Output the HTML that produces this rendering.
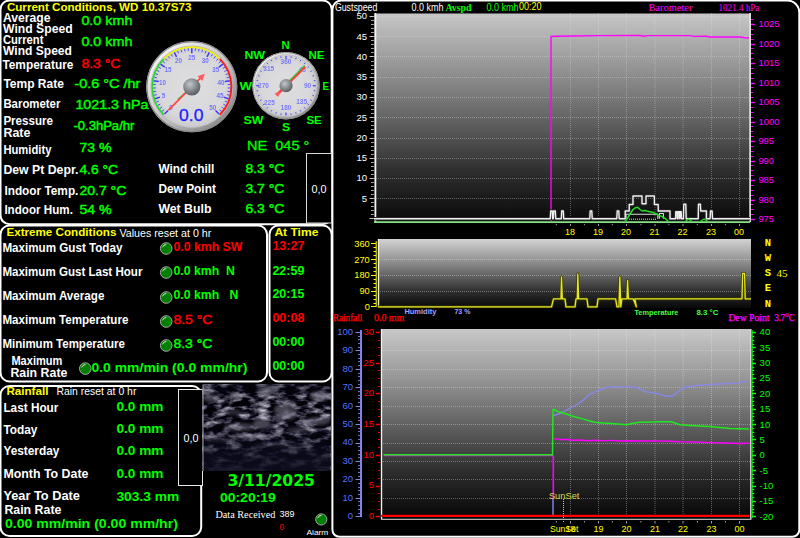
<!DOCTYPE html>
<html lang="en"><head><meta charset="utf-8"><title>Weather Display - Current Conditions</title>
<style>
html,body{margin:0;padding:0;background:#000;overflow:hidden}
svg{display:block}
text{white-space:pre}
.sb{font-family:"Liberation Sans", "DejaVu Sans", sans-serif;font-weight:bold}
.sn{font-family:"Liberation Sans", "DejaVu Sans", sans-serif;font-weight:normal}
.rb{font-family:"Liberation Serif", "DejaVu Serif", serif;font-weight:bold}
.rn{font-family:"Liberation Serif", "DejaVu Serif", serif;font-weight:normal}
.mb{font-family:"Liberation Mono", "DejaVu Sans Mono", monospace;font-weight:bold}
.mn{font-family:"Liberation Mono", "DejaVu Sans Mono", monospace;font-weight:normal}
</style></head><body>
<svg width="800" height="538" viewBox="0 0 800 538">
<defs>
<linearGradient id="g1" x1="0" y1="0" x2="0" y2="1"><stop offset="0" stop-color="#c6c6c6"/><stop offset="0.25" stop-color="#969696"/><stop offset="0.5" stop-color="#646464"/><stop offset="0.75" stop-color="#2f2f2f"/><stop offset="1" stop-color="#080808"/></linearGradient>
<linearGradient id="g2" x1="0" y1="0" x2="0" y2="1"><stop offset="0" stop-color="#d2d2d2"/><stop offset="0.25" stop-color="#a0a0a0"/><stop offset="0.5" stop-color="#6a6a6a"/><stop offset="0.75" stop-color="#303030"/><stop offset="1" stop-color="#080808"/></linearGradient>
<linearGradient id="g3" x1="0" y1="0" x2="0" y2="1"><stop offset="0" stop-color="#c8c8c8"/><stop offset="0.25" stop-color="#989898"/><stop offset="0.5" stop-color="#626262"/><stop offset="0.75" stop-color="#2d2d2d"/><stop offset="1" stop-color="#060606"/></linearGradient>
<linearGradient id="bezel" x1="0.15" y1="0.1" x2="0.85" y2="0.9"><stop offset="0" stop-color="#f4f4f4"/><stop offset="0.5" stop-color="#c8c8c8"/><stop offset="1" stop-color="#8a8a8a"/></linearGradient>
<radialGradient id="face" cx="0.5" cy="0.5" r="0.5"><stop offset="0" stop-color="#dedee0"/><stop offset="0.8" stop-color="#d8d8da"/><stop offset="1" stop-color="#cacacd"/></radialGradient>
<radialGradient id="hub" cx="0.4" cy="0.35" r="0.65"><stop offset="0" stop-color="#c4c8cc"/><stop offset="0.55" stop-color="#8a8e92"/><stop offset="1" stop-color="#5a5c60"/></radialGradient>
<clipPath id="ccl"><rect x="202.5" y="384.3" width="128.3" height="86.7"/></clipPath>
<filter id="clouds" x="0" y="0" width="1" height="1" color-interpolation-filters="sRGB">
<feTurbulence type="fractalNoise" baseFrequency="0.07 0.15" numOctaves="4" seed="11"/>
<feColorMatrix type="matrix" values="2.4 0 0 0 -1.03  2.4 0 0 0 -1.04  2.4 0 0 0 -0.98  0 0 0 0 1"/>
</filter>
<filter id="blur2" x="-0.5" y="-0.5" width="2" height="2"><feGaussianBlur stdDeviation="1.6"/></filter>
<linearGradient id="cshade" x1="0" y1="0" x2="0" y2="1"><stop offset="0" stop-color="#080818" stop-opacity="0.45"/><stop offset="0.25" stop-color="#080818" stop-opacity="0.15"/><stop offset="0.6" stop-color="#0c0c20" stop-opacity="0.35"/><stop offset="0.8" stop-color="#0c0c1e" stop-opacity="0.8"/><stop offset="1" stop-color="#0c0c1e" stop-opacity="0.92"/></linearGradient>
<radialGradient id="led" cx="0.4" cy="0.35" r="0.7"><stop offset="0" stop-color="#2a9a2a"/><stop offset="1" stop-color="#006400"/></radialGradient>
</defs>
<rect width="800" height="538" fill="#000"/>
<rect x="0.5" y="0.5" width="331.2" height="223.7" rx="9" ry="9" fill="#000" stroke="#fff" stroke-width="2"/>
<rect x="0.5" y="225.5" width="266.5" height="156.0" rx="9" ry="9" fill="#000" stroke="#fff" stroke-width="2"/>
<rect x="269.5" y="225.5" width="62.19999999999999" height="156.0" rx="9" ry="9" fill="#000" stroke="#fff" stroke-width="2"/>
<rect x="0.5" y="386.0" width="200.7" height="150" rx="9" ry="9" fill="#000" stroke="#fff" stroke-width="2"/>
<path d="M341.5 0.5H787.3A12 12 0 0 1 799.3 12.5V529.8A7 7 0 0 1 792.3 536.8H339.4A7 7 0 0 1 332.4 529.8V9.6A9.1 9.1 0 0 1 341.5 0.5Z" fill="#000" stroke="#fff" stroke-width="2"/>
<rect x="306.5" y="153.5" width="25" height="69.5" fill="#000" stroke="#d8d8d8" stroke-width="1"/>
<rect x="178.5" y="389.5" width="24" height="96" fill="#000" stroke="#e8e8e8" stroke-width="1"/>
<text class="sn" x="311.4" y="192.5" font-size="10" fill="#ffffff" textLength="15.0" lengthAdjust="spacingAndGlyphs">0,0</text>
<text class="sn" x="183.4" y="442.0" font-size="10" fill="#ffffff" textLength="15.0" lengthAdjust="spacingAndGlyphs">0,0</text>
<text class="sb" x="6.9" y="10.5" font-size="11" fill="#ffff00" textLength="184.5" lengthAdjust="spacingAndGlyphs">Current Conditions, WD 10.37S73</text>
<text class="sb" x="2.9" y="22.0" font-size="12" fill="#ffffff" textLength="47.5" lengthAdjust="spacingAndGlyphs">Average</text>
<text class="sb" x="3.1" y="33.0" font-size="12" fill="#ffffff" textLength="69.5" lengthAdjust="spacingAndGlyphs">Wind Speed</text>
<text class="sb" x="2.9" y="43.8" font-size="12" fill="#ffffff" textLength="40.5" lengthAdjust="spacingAndGlyphs">Current</text>
<text class="sb" x="3.1" y="54.8" font-size="12" fill="#ffffff" textLength="68.8" lengthAdjust="spacingAndGlyphs">Wind Speed</text>
<text class="sb" x="2.4" y="69.0" font-size="12" fill="#ffffff" textLength="71.0" lengthAdjust="spacingAndGlyphs">Temperature</text>
<text class="sb" x="3.4" y="88.0" font-size="12" fill="#ffffff" textLength="60.5" lengthAdjust="spacingAndGlyphs">Temp Rate</text>
<text class="sb" x="3.4" y="108.0" font-size="12" fill="#ffffff" textLength="57.0" lengthAdjust="spacingAndGlyphs">Barometer</text>
<text class="sb" x="3.4" y="124.9" font-size="12" fill="#ffffff" textLength="49.5" lengthAdjust="spacingAndGlyphs">Pressure</text>
<text class="sb" x="3.4" y="136.6" font-size="12" fill="#ffffff" textLength="27.0" lengthAdjust="spacingAndGlyphs">Rate</text>
<text class="sb" x="3.4" y="153.5" font-size="12" fill="#ffffff" textLength="48.0" lengthAdjust="spacingAndGlyphs">Humidity</text>
<text class="sb" x="3.4" y="173.7" font-size="12" fill="#ffffff" textLength="75.0" lengthAdjust="spacingAndGlyphs">Dew Pt Depr.</text>
<text class="sb" x="4.4" y="194.8" font-size="12" fill="#ffffff" textLength="74.0" lengthAdjust="spacingAndGlyphs">Indoor Temp.</text>
<text class="sb" x="4.4" y="214.0" font-size="12" fill="#ffffff" textLength="68.5" lengthAdjust="spacingAndGlyphs">Indoor Hum.</text>
<text class="sb" x="158.4" y="172.5" font-size="12" fill="#ffffff" textLength="56.0" lengthAdjust="spacingAndGlyphs">Wind chill</text>
<text class="sb" x="158.4" y="192.5" font-size="12" fill="#ffffff" textLength="57.5" lengthAdjust="spacingAndGlyphs">Dew Point</text>
<text class="sb" x="158.4" y="212.5" font-size="12" fill="#ffffff" textLength="53.0" lengthAdjust="spacingAndGlyphs">Wet Bulb</text>
<text class="sn" x="81.4" y="25.4" font-size="13.5" fill="#00ff00" textLength="51.0" lengthAdjust="spacingAndGlyphs" stroke="#00ff00" stroke-width="0.45">0.0 kmh</text>
<text class="sn" x="81.4" y="46.2" font-size="13.5" fill="#00ff00" textLength="51.0" lengthAdjust="spacingAndGlyphs" stroke="#00ff00" stroke-width="0.45">0.0 kmh</text>
<text class="sn" x="81.4" y="68.2" font-size="13.5" fill="#ff0000" textLength="39.0" lengthAdjust="spacingAndGlyphs" stroke="#ff0000" stroke-width="0.45">8.3 °C</text>
<text class="sn" x="74.4" y="88.4" font-size="13.5" fill="#00ff00" textLength="66.0" lengthAdjust="spacingAndGlyphs" stroke="#00ff00" stroke-width="0.45">-0.6 °C /hr</text>
<text class="sn" x="75.4" y="109.2" font-size="13.5" fill="#00ff00" textLength="73.0" lengthAdjust="spacingAndGlyphs" stroke="#00ff00" stroke-width="0.45">1021.3 hPa</text>
<text class="sn" x="73.4" y="129.5" font-size="12" fill="#00ff00" textLength="61.0" lengthAdjust="spacingAndGlyphs" stroke="#00ff00" stroke-width="0.45">-0.3hPa/hr</text>
<text class="sn" x="79.4" y="152.3" font-size="13.5" fill="#00ff00" textLength="32.0" lengthAdjust="spacingAndGlyphs" stroke="#00ff00" stroke-width="0.45">73 %</text>
<text class="sn" x="79.4" y="173.8" font-size="13.5" fill="#00ff00" textLength="38.5" lengthAdjust="spacingAndGlyphs" stroke="#00ff00" stroke-width="0.45">4.6 °C</text>
<text class="sn" x="79.4" y="194.8" font-size="13.5" fill="#00ff00" textLength="47.0" lengthAdjust="spacingAndGlyphs" stroke="#00ff00" stroke-width="0.45">20.7 °C</text>
<text class="sn" x="79.4" y="214.3" font-size="13.5" fill="#00ff00" textLength="32.0" lengthAdjust="spacingAndGlyphs" stroke="#00ff00" stroke-width="0.45">54 %</text>
<text class="sn" x="245.4" y="172.8" font-size="13.5" fill="#00ff00" textLength="39.0" lengthAdjust="spacingAndGlyphs" stroke="#00ff00" stroke-width="0.45">8.3 °C</text>
<text class="sn" x="245.4" y="192.8" font-size="13.5" fill="#00ff00" textLength="39.0" lengthAdjust="spacingAndGlyphs" stroke="#00ff00" stroke-width="0.45">3.7 °C</text>
<text class="sn" x="245.4" y="213.3" font-size="13.5" fill="#00ff00" textLength="39.0" lengthAdjust="spacingAndGlyphs" stroke="#00ff00" stroke-width="0.45">6.3 °C</text>
<text class="sn" x="246.9" y="149.5" font-size="13.5" fill="#00ff00" textLength="62.5" lengthAdjust="spacingAndGlyphs" stroke="#00ff00" stroke-width="0.3">NE  045 °</text>
<text class="sb" x="6.4" y="236.0" font-size="11" fill="#ffff00" textLength="110.0" lengthAdjust="spacingAndGlyphs">Extreme Conditions</text>
<text class="sn" x="119.4" y="236.8" font-size="10.5" fill="#ffffff" textLength="92.0" lengthAdjust="spacingAndGlyphs">Values reset at 0 hr</text>
<text class="sb" x="274.4" y="236.0" font-size="11" fill="#ffff00" textLength="44.0" lengthAdjust="spacingAndGlyphs">At Time</text>
<text class="sb" x="2.4" y="251.7" font-size="12" fill="#ffffff" textLength="120.0" lengthAdjust="spacingAndGlyphs">Maximum Gust Today</text>
<text class="sb" x="2.4" y="276.0" font-size="12" fill="#ffffff" textLength="140.0" lengthAdjust="spacingAndGlyphs">Maximum Gust Last Hour</text>
<text class="sb" x="2.4" y="300.0" font-size="12" fill="#ffffff" textLength="102.0" lengthAdjust="spacingAndGlyphs">Maximum Average</text>
<text class="sb" x="2.4" y="324.0" font-size="12" fill="#ffffff" textLength="126.0" lengthAdjust="spacingAndGlyphs">Maximum Temperature</text>
<text class="sb" x="2.4" y="348.0" font-size="12" fill="#ffffff" textLength="122.5" lengthAdjust="spacingAndGlyphs">Minimum Temperature</text>
<text class="sb" x="11.4" y="364.7" font-size="12" fill="#ffffff" textLength="51.0" lengthAdjust="spacingAndGlyphs">Maximum</text>
<text class="sb" x="10.4" y="376.5" font-size="12" fill="#ffffff" textLength="57.0" lengthAdjust="spacingAndGlyphs">Rain Rate</text>
<circle cx="166.2" cy="248.5" r="5.8" fill="#008000" stroke="#a8a8a8" stroke-width="1"/>
<path d="M162.6 247.3A4 4 0 0 1 166.4 244.5" fill="none" stroke="#e8f4e8" stroke-width="0.9"/>
<circle cx="166.2" cy="272.5" r="5.8" fill="#008000" stroke="#a8a8a8" stroke-width="1"/>
<path d="M162.6 271.3A4 4 0 0 1 166.4 268.5" fill="none" stroke="#e8f4e8" stroke-width="0.9"/>
<circle cx="166.2" cy="297.5" r="5.8" fill="#008000" stroke="#a8a8a8" stroke-width="1"/>
<path d="M162.6 296.3A4 4 0 0 1 166.4 293.5" fill="none" stroke="#e8f4e8" stroke-width="0.9"/>
<circle cx="166.2" cy="321.5" r="5.8" fill="#008000" stroke="#a8a8a8" stroke-width="1"/>
<path d="M162.6 320.3A4 4 0 0 1 166.4 317.5" fill="none" stroke="#e8f4e8" stroke-width="0.9"/>
<circle cx="166.2" cy="345.5" r="5.8" fill="#008000" stroke="#a8a8a8" stroke-width="1"/>
<path d="M162.6 344.3A4 4 0 0 1 166.4 341.5" fill="none" stroke="#e8f4e8" stroke-width="0.9"/>
<circle cx="85.3" cy="368.6" r="5.8" fill="#008000" stroke="#a8a8a8" stroke-width="1"/>
<path d="M81.7 367.4A4 4 0 0 1 85.5 364.6" fill="none" stroke="#e8f4e8" stroke-width="0.9"/>
<text class="sb" x="173.4" y="250.6" font-size="12" fill="#ff0000" textLength="69.0" lengthAdjust="spacingAndGlyphs">0.0 kmh SW</text>
<text class="sb" x="173.4" y="275.0" font-size="12" fill="#00ff00" textLength="61.5" lengthAdjust="spacingAndGlyphs">0.0 kmh  N</text>
<text class="sb" x="173.4" y="298.6" font-size="12" fill="#00ff00" textLength="65.0" lengthAdjust="spacingAndGlyphs">0.0 kmh   N</text>
<text class="sn" x="173.4" y="324.0" font-size="13" fill="#ff0000" textLength="39.0" lengthAdjust="spacingAndGlyphs" stroke="#ff0000" stroke-width="0.45">8.5 °C</text>
<text class="sn" x="173.4" y="348.0" font-size="13" fill="#00ff00" textLength="39.0" lengthAdjust="spacingAndGlyphs" stroke="#00ff00" stroke-width="0.45">8.3 °C</text>
<text class="sb" x="91.4" y="372.0" font-size="13" fill="#00ff00" textLength="156.0" lengthAdjust="spacingAndGlyphs">0.0 mm/min (0.0 mm/hr)</text>
<text class="sb" x="272.4" y="250.0" font-size="12" fill="#ff0000" textLength="32.0" lengthAdjust="spacingAndGlyphs">13:27</text>
<text class="sb" x="272.4" y="274.5" font-size="12" fill="#00ff00" textLength="32.0" lengthAdjust="spacingAndGlyphs">22:59</text>
<text class="sb" x="272.4" y="298.0" font-size="12" fill="#00ff00" textLength="32.0" lengthAdjust="spacingAndGlyphs">20:15</text>
<text class="sb" x="272.4" y="322.0" font-size="12" fill="#ff0000" textLength="32.0" lengthAdjust="spacingAndGlyphs">00:08</text>
<text class="sb" x="272.4" y="346.0" font-size="12" fill="#00ff00" textLength="32.0" lengthAdjust="spacingAndGlyphs">00:00</text>
<text class="sb" x="272.4" y="370.0" font-size="12" fill="#00ff00" textLength="32.0" lengthAdjust="spacingAndGlyphs">00:00</text>
<text class="sb" x="6.4" y="394.5" font-size="11" fill="#ffff00" textLength="42.0" lengthAdjust="spacingAndGlyphs">Rainfall</text>
<text class="sn" x="56.4" y="395.4" font-size="10.5" fill="#ffffff" textLength="80.0" lengthAdjust="spacingAndGlyphs">Rain reset at 0 hr</text>
<text class="sb" x="3.4" y="411.8" font-size="12" fill="#ffffff" textLength="55.0" lengthAdjust="spacingAndGlyphs">Last Hour</text>
<text class="sb" x="3.4" y="433.6" font-size="12" fill="#ffffff" textLength="34.0" lengthAdjust="spacingAndGlyphs">Today</text>
<text class="sb" x="3.4" y="455.2" font-size="12" fill="#ffffff" textLength="56.0" lengthAdjust="spacingAndGlyphs">Yesterday</text>
<text class="sb" x="3.4" y="477.9" font-size="12" fill="#ffffff" textLength="85.0" lengthAdjust="spacingAndGlyphs">Month To Date</text>
<text class="sb" x="3.4" y="499.9" font-size="12" fill="#ffffff" textLength="76.5" lengthAdjust="spacingAndGlyphs">Year To Date</text>
<text class="sb" x="4.4" y="513.5" font-size="12" fill="#ffffff" textLength="57.0" lengthAdjust="spacingAndGlyphs">Rain Rate</text>
<text class="sb" x="116.4" y="411.4" font-size="13" fill="#00ff00" textLength="47.0" lengthAdjust="spacingAndGlyphs">0.0 mm</text>
<text class="sb" x="116.4" y="433.4" font-size="13" fill="#00ff00" textLength="47.0" lengthAdjust="spacingAndGlyphs">0.0 mm</text>
<text class="sb" x="116.4" y="455.4" font-size="13" fill="#00ff00" textLength="47.0" lengthAdjust="spacingAndGlyphs">0.0 mm</text>
<text class="sb" x="116.4" y="477.9" font-size="13" fill="#00ff00" textLength="47.0" lengthAdjust="spacingAndGlyphs">0.0 mm</text>
<text class="sb" x="116.4" y="501.4" font-size="13" fill="#00ff00" textLength="63.0" lengthAdjust="spacingAndGlyphs">303.3 mm</text>
<text class="sb" x="4.9" y="527.5" font-size="13" fill="#00ff00" textLength="173.0" lengthAdjust="spacingAndGlyphs">0.00 mm/min (0.00 mm/hr)</text>
<text class="sb" x="227.4" y="486.3" font-size="15.3" fill="#00ff00" textLength="87.5" lengthAdjust="spacingAndGlyphs" style="font-family:'DejaVu Sans','Liberation Sans',sans-serif">3/11/2025</text>
<text class="sb" x="219.9" y="502.0" font-size="12.5" fill="#00ff00" textLength="56.0" lengthAdjust="spacingAndGlyphs">00:20:19</text>
<text class="rn" x="215.4" y="518.0" font-size="10" fill="#ffffff" textLength="60.0" lengthAdjust="spacingAndGlyphs">Data Received</text>
<text class="sn" x="279.4" y="516.6" font-size="8.5" fill="#ffffff" textLength="15.0" lengthAdjust="spacingAndGlyphs">389</text>
<text class="sn" x="279.6" y="530.3" font-size="8.5" fill="#ff0000">0</text>
<circle cx="321.3" cy="519.4" r="5.6" fill="#008000" stroke="#a8a8a8" stroke-width="1"/>
<path d="M317.7 518.2A4 4 0 0 1 321.5 515.4" fill="none" stroke="#e8f4e8" stroke-width="0.9"/>
<text class="sn" x="306.4" y="534.5" font-size="8" fill="#ffffff" textLength="22.0" lengthAdjust="spacingAndGlyphs">Alarm</text>
<rect x="374.5" y="13.5" width="376" height="210" fill="url(#g1)"/>
<line x1="374" y1="198.5" x2="750" y2="198.5" stroke="#e8e8e8" stroke-width="1" stroke-dasharray="1 1" opacity="0.34"/>
<line x1="374" y1="178.5" x2="750" y2="178.5" stroke="#e8e8e8" stroke-width="1" stroke-dasharray="1 1" opacity="0.34"/>
<line x1="374" y1="158.5" x2="750" y2="158.5" stroke="#e8e8e8" stroke-width="1" stroke-dasharray="1 1" opacity="0.34"/>
<line x1="374" y1="138.5" x2="750" y2="138.5" stroke="#e8e8e8" stroke-width="1" stroke-dasharray="1 1" opacity="0.34"/>
<line x1="374" y1="117.5" x2="750" y2="117.5" stroke="#e8e8e8" stroke-width="1" stroke-dasharray="1 1" opacity="0.34"/>
<line x1="374" y1="97.5" x2="750" y2="97.5" stroke="#e8e8e8" stroke-width="1" stroke-dasharray="1 1" opacity="0.34"/>
<line x1="374" y1="77.5" x2="750" y2="77.5" stroke="#e8e8e8" stroke-width="1" stroke-dasharray="1 1" opacity="0.34"/>
<line x1="374" y1="56.5" x2="750" y2="56.5" stroke="#e8e8e8" stroke-width="1" stroke-dasharray="1 1" opacity="0.34"/>
<line x1="374" y1="36.5" x2="750" y2="36.5" stroke="#e8e8e8" stroke-width="1" stroke-dasharray="1 1" opacity="0.34"/>
<line x1="374" y1="16.5" x2="750" y2="16.5" stroke="#e8e8e8" stroke-width="1" stroke-dasharray="1 1" opacity="0.34"/>
<line x1="570.5" y1="13" x2="570.5" y2="220" stroke="#e8e8e8" stroke-width="1" stroke-dasharray="1 1" opacity="0.32"/>
<line x1="598.5" y1="13" x2="598.5" y2="220" stroke="#e8e8e8" stroke-width="1" stroke-dasharray="1 1" opacity="0.32"/>
<line x1="626.5" y1="13" x2="626.5" y2="220" stroke="#e8e8e8" stroke-width="1" stroke-dasharray="1 1" opacity="0.32"/>
<line x1="655.0" y1="13" x2="655.0" y2="220" stroke="#e8e8e8" stroke-width="1" stroke-dasharray="1 1" opacity="0.32"/>
<line x1="683.0" y1="13" x2="683.0" y2="220" stroke="#e8e8e8" stroke-width="1" stroke-dasharray="1 1" opacity="0.32"/>
<line x1="711.5" y1="13" x2="711.5" y2="220" stroke="#e8e8e8" stroke-width="1" stroke-dasharray="1 1" opacity="0.32"/>
<line x1="739.5" y1="13" x2="739.5" y2="220" stroke="#e8e8e8" stroke-width="1" stroke-dasharray="1 1" opacity="0.32"/>
<line x1="375.4" y1="13" x2="375.4" y2="222" stroke="#f4f4f4" stroke-width="1.8" opacity="1"/>
<path d="M369.5 218.5H373.8 M369.5 198.5H373.8 M369.5 178.5H373.8 M369.5 158.5H373.8 M369.5 138.5H373.8 M369.5 117.5H373.8 M369.5 97.5H373.8 M369.5 77.5H373.8 M369.5 56.5H373.8 M369.5 36.5H373.8 M369.5 16.5H373.8" stroke="#c4c4c4" stroke-width="1.2" fill="none"/>
<path d="M371 214.5H373.8 M371 210.5H373.8 M371 206.5H373.8 M371 202.5H373.8 M371 194.5H373.8 M371 190.5H373.8 M371 186.5H373.8 M371 182.5H373.8 M371 174.5H373.8 M371 170.5H373.8 M371 166.5H373.8 M371 162.5H373.8 M371 154.5H373.8 M371 150.5H373.8 M371 146.5H373.8 M371 142.5H373.8 M371 133.5H373.8 M371 129.5H373.8 M371 125.5H373.8 M371 121.5H373.8 M371 113.5H373.8 M371 109.5H373.8 M371 105.5H373.8 M371 101.5H373.8 M371 93.5H373.8 M371 89.5H373.8 M371 85.5H373.8 M371 81.5H373.8 M371 73.5H373.8 M371 69.5H373.8 M371 65.5H373.8 M371 61.5H373.8 M371 52.5H373.8 M371 48.5H373.8 M371 44.5H373.8 M371 40.5H373.8 M371 32.5H373.8 M371 28.5H373.8 M371 24.5H373.8 M371 20.5H373.8" stroke="#a8a8a8" stroke-width="1" fill="none"/>
<text class="sn" x="367.0" y="201.6" font-size="9.5" fill="#ffffff" text-anchor="end">5</text>
<text class="sn" x="367.0" y="181.3" font-size="9.5" fill="#ffffff" text-anchor="end">10</text>
<text class="sn" x="367.0" y="161.1" font-size="9.5" fill="#ffffff" text-anchor="end">15</text>
<text class="sn" x="367.0" y="140.8" font-size="9.5" fill="#ffffff" text-anchor="end">20</text>
<text class="sn" x="367.0" y="120.5" font-size="9.5" fill="#ffffff" text-anchor="end">25</text>
<text class="sn" x="367.0" y="100.3" font-size="9.5" fill="#ffffff" text-anchor="end">30</text>
<text class="sn" x="367.0" y="80.0" font-size="9.5" fill="#ffffff" text-anchor="end">35</text>
<text class="sn" x="367.0" y="59.8" font-size="9.5" fill="#ffffff" text-anchor="end">40</text>
<text class="sn" x="367.0" y="39.5" font-size="9.5" fill="#ffffff" text-anchor="end">45</text>
<text class="sn" x="367.0" y="19.3" font-size="9.5" fill="#ffffff" text-anchor="end">50</text>
<line x1="750.1" y1="13" x2="750.1" y2="222" stroke="#ececec" stroke-width="1.6" opacity="1"/>
<path d="M751 219.5H754.8 M751 200.5H754.8 M751 180.5H754.8 M751 161.5H754.8 M751 141.5H754.8 M751 122.5H754.8 M751 102.5H754.8 M751 83.5H754.8 M751 63.5H754.8 M751 44.5H754.8 M751 24.5H754.8" stroke="#ff00ff" stroke-width="1.3" fill="none"/>
<path d="M751 214.5H753.2 M751 209.5H753.2 M751 204.5H753.2 M751 195.5H753.2 M751 190.5H753.2 M751 185.5H753.2 M751 175.5H753.2 M751 170.5H753.2 M751 165.5H753.2 M751 156.5H753.2 M751 151.5H753.2 M751 146.5H753.2 M751 136.5H753.2 M751 131.5H753.2 M751 126.5H753.2 M751 117.5H753.2 M751 112.5H753.2 M751 107.5H753.2 M751 97.5H753.2 M751 92.5H753.2 M751 87.5H753.2 M751 78.5H753.2 M751 73.5H753.2 M751 68.5H753.2 M751 58.5H753.2 M751 53.5H753.2 M751 48.5H753.2 M751 39.5H753.2 M751 34.5H753.2 M751 29.5H753.2 M751 19.5H753.2" stroke="#ff00ff" stroke-width="1" fill="none"/>
<text class="sn" x="758.4" y="222.1" font-size="9.5" fill="#ff00ff" textLength="15.6" lengthAdjust="spacingAndGlyphs">975</text>
<text class="sn" x="758.4" y="202.6" font-size="9.5" fill="#ff00ff" textLength="15.6" lengthAdjust="spacingAndGlyphs">980</text>
<text class="sn" x="758.4" y="183.1" font-size="9.5" fill="#ff00ff" textLength="15.6" lengthAdjust="spacingAndGlyphs">985</text>
<text class="sn" x="758.4" y="163.6" font-size="9.5" fill="#ff00ff" textLength="15.6" lengthAdjust="spacingAndGlyphs">990</text>
<text class="sn" x="758.4" y="144.1" font-size="9.5" fill="#ff00ff" textLength="15.6" lengthAdjust="spacingAndGlyphs">995</text>
<text class="sn" x="758.4" y="124.6" font-size="9.5" fill="#ff00ff" textLength="21.3" lengthAdjust="spacingAndGlyphs">1000</text>
<text class="sn" x="758.4" y="105.1" font-size="9.5" fill="#ff00ff" textLength="21.3" lengthAdjust="spacingAndGlyphs">1005</text>
<text class="sn" x="758.4" y="85.6" font-size="9.5" fill="#ff00ff" textLength="21.3" lengthAdjust="spacingAndGlyphs">1010</text>
<text class="sn" x="758.4" y="66.1" font-size="9.5" fill="#ff00ff" textLength="21.3" lengthAdjust="spacingAndGlyphs">1015</text>
<text class="sn" x="758.4" y="46.6" font-size="9.5" fill="#ff00ff" textLength="21.3" lengthAdjust="spacingAndGlyphs">1020</text>
<text class="sn" x="758.4" y="27.1" font-size="9.5" fill="#ff00ff" textLength="21.3" lengthAdjust="spacingAndGlyphs">1025</text>
<text class="sn" x="334.9" y="10.8" font-size="10" fill="#ffffff" textLength="42.5" lengthAdjust="spacingAndGlyphs">Gustspeed</text>
<text class="sn" x="411.4" y="10.8" font-size="10" fill="#ffffff" textLength="32.0" lengthAdjust="spacingAndGlyphs">0.0 kmh</text>
<text class="rb" x="445.4" y="10.5" font-size="9.5" fill="#00ff00" textLength="26.0" lengthAdjust="spacingAndGlyphs">Avspd</text>
<text class="sn" x="486.4" y="10.8" font-size="10" fill="#00ff00" textLength="32.0" lengthAdjust="spacingAndGlyphs">0.0 kmh</text>
<text class="sn" x="518.9" y="10.3" font-size="10" fill="#ffff00" textLength="22.5" lengthAdjust="spacingAndGlyphs">00:20</text>
<text class="rn" x="648.4" y="10.5" font-size="9.5" fill="#ff00ff" textLength="44.0" lengthAdjust="spacingAndGlyphs">Barometer</text>
<text class="rn" x="718.4" y="10.5" font-size="9.5" fill="#ff00ff" textLength="41.0" lengthAdjust="spacingAndGlyphs">1021.4 hPa</text>
<line x1="551" y1="36" x2="551" y2="221" stroke="#ff00ff" stroke-width="1.4" opacity="1"/>
<polyline points="551.0,36.5 556.0,36.2 575.0,36.0 600.0,35.6 640.0,35.5 644.0,36.3 648.0,35.6 690.0,35.6 694.0,36.4 706.0,36.2 710.0,37.0 740.0,37.0 745.0,37.8 749.0,38.0" fill="none" stroke="#ff00ff" stroke-width="1.4" stroke-linejoin="round"/>
<polyline points="374.0,218.7 550.3,218.7 550.7,211.0 552.3,211.0 552.7,218.7 553.3,218.7 553.7,211.0 555.3,211.0 555.7,218.7 561.3,218.7 561.7,211.0 563.3,211.0 563.7,218.7 589.8,218.7 590.2,211.0 591.8,211.0 592.2,218.7 616.8,218.7 617.2,211.0 618.8,211.0 619.2,218.7 625.2,218.7 625.2,211.0 629.2,211.0 629.2,204.5 633.0,204.5 633.0,196.0 642.0,196.0 642.0,203.8 646.0,203.8 646.0,196.0 654.4,196.0 654.4,204.5 658.2,204.5 658.2,211.0 670.0,211.0 670.0,218.7 675.6,218.7 675.8,211.8 677.3,211.8 677.5,218.7 678.0,218.7 678.2,211.8 679.6,211.8 679.8,218.7 680.2,211.8 681.2,211.8 681.4,218.7 683.4,218.7 683.8,204.2 685.8,204.2 686.2,218.7 698.2,218.7 698.5,204.2 700.4,204.2 700.7,211.0 706.4,211.0 706.4,218.7 710.1,218.7 710.5,211.0 712.1,211.0 712.5,218.7 750.0,218.7" fill="none" stroke="#282828" stroke-width="3.4" stroke-linejoin="round"/>
<rect x="675.6" y="212" width="5.8" height="6.5" fill="#8a8a8a"/>
<polyline points="374.0,218.7 550.3,218.7 550.7,211.0 552.3,211.0 552.7,218.7 553.3,218.7 553.7,211.0 555.3,211.0 555.7,218.7 561.3,218.7 561.7,211.0 563.3,211.0 563.7,218.7 589.8,218.7 590.2,211.0 591.8,211.0 592.2,218.7 616.8,218.7 617.2,211.0 618.8,211.0 619.2,218.7 625.2,218.7 625.2,211.0 629.2,211.0 629.2,204.5 633.0,204.5 633.0,196.0 642.0,196.0 642.0,203.8 646.0,203.8 646.0,196.0 654.4,196.0 654.4,204.5 658.2,204.5 658.2,211.0 670.0,211.0 670.0,218.7 675.6,218.7 675.8,211.8 677.3,211.8 677.5,218.7 678.0,218.7 678.2,211.8 679.6,211.8 679.8,218.7 680.2,211.8 681.2,211.8 681.4,218.7 683.4,218.7 683.8,204.2 685.8,204.2 686.2,218.7 698.2,218.7 698.5,204.2 700.4,204.2 700.7,211.0 706.4,211.0 706.4,218.7 710.1,218.7 710.5,211.0 712.1,211.0 712.5,218.7 750.0,218.7" fill="none" stroke="#f0f0f0" stroke-width="1.4" stroke-linejoin="round"/>
<polyline points="626.0,218.7 626.0,214.3 657.8,214.3 657.8,218.7" fill="none" stroke="#dcdcdc" stroke-width="1.1" stroke-linejoin="round"/>
<polyline points="659.4,218.7 659.4,213.5 663.4,213.5 663.4,218.7" fill="none" stroke="#dcdcdc" stroke-width="1.1" stroke-linejoin="round"/>
<line x1="629" y1="219.2" x2="657" y2="219.2" stroke="#e8e8e8" stroke-width="1" stroke-dasharray="1 1" opacity="1"/>
<line x1="374" y1="222.2" x2="750" y2="222.2" stroke="#86e286" stroke-width="1.7" opacity="1"/>
<polyline points="625.0,221.5 627.0,219.0 630.0,214.0 633.0,209.5 635.5,207.7 637.5,207.3 640.0,209.5 642.2,211.0 645.0,210.6 648.7,211.5 653.6,212.6 658.5,215.0 662.0,216.6 665.0,218.3 668.2,221.3" fill="none" stroke="#20e020" stroke-width="1.5" stroke-linejoin="round"/>
<polyline points="685.0,221.5 688.5,219.0 692.0,221.5" fill="none" stroke="#20e020" stroke-width="1.3" stroke-linejoin="round"/>
<polyline points="700.0,221.5 704.0,219.0 708.0,221.5" fill="none" stroke="#20e020" stroke-width="1.3" stroke-linejoin="round"/>
<path d="M570.5 224v2M556.4 224v1.2 M598.5 224v2M584.4 224v1.2 M626.5 224v2M612.4 224v1.2 M655.0 224v2M640.9 224v1.2 M683.0 224v2M668.9 224v1.2 M711.5 224v2M697.4 224v1.2 M739.5 224v2M725.4 224v1.2" stroke="#9a9a9a" stroke-width="1" fill="none"/>
<text class="sn" x="570.0" y="235.4" font-size="9" fill="#ffff00" text-anchor="middle">18</text>
<text class="sn" x="598.0" y="235.4" font-size="9" fill="#ffff00" text-anchor="middle">19</text>
<text class="sn" x="626.0" y="235.4" font-size="9" fill="#ffff00" text-anchor="middle">20</text>
<text class="sn" x="654.5" y="235.4" font-size="9" fill="#ffff00" text-anchor="middle">21</text>
<text class="sn" x="682.5" y="235.4" font-size="9" fill="#ffff00" text-anchor="middle">22</text>
<text class="sn" x="711.0" y="235.4" font-size="9" fill="#ffff00" text-anchor="middle">23</text>
<text class="sn" x="739.0" y="235.4" font-size="9" fill="#ffff00" text-anchor="middle">00</text>
<rect x="378" y="239" width="373" height="69" fill="url(#g2)"/>
<line x1="378" y1="291.5" x2="751" y2="291.5" stroke="#f0f0f0" stroke-width="1" stroke-dasharray="1 1" opacity="0.35"/>
<line x1="378" y1="275.5" x2="751" y2="275.5" stroke="#f0f0f0" stroke-width="1" stroke-dasharray="1 1" opacity="0.35"/>
<line x1="378" y1="259.5" x2="751" y2="259.5" stroke="#f0f0f0" stroke-width="1" stroke-dasharray="1 1" opacity="0.35"/>
<line x1="378.5" y1="239" x2="378.5" y2="308" stroke="#f0f0f0" stroke-width="1.4" opacity="1"/>
<line x1="376.2" y1="241" x2="376.2" y2="307" stroke="#ffff00" stroke-width="1" opacity="1"/>
<path d="M371 306.5H376 M371 291.5H376 M371 275.5H376 M371 259.5H376 M371 243.5H376" stroke="#ffff00" stroke-width="1.2" fill="none"/>
<path d="M373.5 303.5H376 M373.5 299.5H376 M373.5 295.5H376 M373.5 287.5H376 M373.5 283.5H376 M373.5 279.5H376 M373.5 271.5H376 M373.5 267.5H376 M373.5 263.5H376 M373.5 255.5H376 M373.5 251.5H376 M373.5 247.5H376" stroke="#ffff00" stroke-width="1" fill="none"/>
<text class="sn" x="369.8" y="309.8" font-size="9.3" fill="#ffff00" text-anchor="end">0</text>
<text class="sn" x="369.8" y="294.0" font-size="9.3" fill="#ffff00" text-anchor="end">90</text>
<text class="sn" x="369.8" y="278.2" font-size="9.3" fill="#ffff00" text-anchor="end">180</text>
<text class="sn" x="369.8" y="262.5" font-size="9.3" fill="#ffff00" text-anchor="end">270</text>
<text class="sn" x="369.8" y="246.7" font-size="9.3" fill="#ffff00" text-anchor="end">360</text>
<text class="mb" x="768.0" y="246.0" font-size="10.5" fill="#ffff00" text-anchor="middle">N</text>
<text class="mb" x="768.0" y="261.4" font-size="10.5" fill="#ffff00" text-anchor="middle">W</text>
<text class="mb" x="768.0" y="276.2" font-size="10.5" fill="#ffff00" text-anchor="middle">S</text>
<text class="mb" x="768.0" y="291.2" font-size="10.5" fill="#ffff00" text-anchor="middle">E</text>
<text class="mb" x="768.0" y="306.8" font-size="10.5" fill="#ffff00" text-anchor="middle">N</text>
<text class="rn" x="776.4" y="276.5" font-size="10.5" fill="#ffff00" textLength="11.0" lengthAdjust="spacingAndGlyphs">45</text>
<polyline points="378.0,306.8 551.5,306.8 553.5,298.8 561.0,298.8 561.5,276.8 562.3,298.8 565.0,298.8 566.0,306.8 575.0,306.8 576.0,298.8 577.3,298.8 577.8,274.0 578.6,298.8 587.0,298.8 588.0,306.8 597.0,306.8 598.0,298.8 615.6,298.8 617.0,306.8 619.0,306.8 619.8,276.8 620.8,306.8 621.8,298.8 627.0,298.8 627.6,280.4 628.4,298.8 633.0,298.8 635.0,303.0 636.3,306.8 634.8,298.8 742.0,298.8 742.6,273.5 744.6,273.5 745.2,298.8 751.0,298.8" fill="none" stroke="#3a3a00" stroke-width="2.8" stroke-linejoin="round"/>
<polyline points="378.0,306.8 551.5,306.8 553.5,298.8 561.0,298.8 561.5,276.8 562.3,298.8 565.0,298.8 566.0,306.8 575.0,306.8 576.0,298.8 577.3,298.8 577.8,274.0 578.6,298.8 587.0,298.8 588.0,306.8 597.0,306.8 598.0,298.8 615.6,298.8 617.0,306.8 619.0,306.8 619.8,276.8 620.8,306.8 621.8,298.8 627.0,298.8 627.6,280.4 628.4,298.8 633.0,298.8 635.0,303.0 636.3,306.8 634.8,298.8 742.0,298.8 742.6,273.5 744.6,273.5 745.2,298.8 751.0,298.8" fill="none" stroke="#e6e628" stroke-width="1.3" stroke-linejoin="round"/>
<text class="rn" x="332.9" y="320.5" font-size="10" fill="#ff0000" textLength="29.5" lengthAdjust="spacingAndGlyphs" stroke="#ff0000" stroke-width="0.25">Rainfall</text>
<text class="rn" x="373.9" y="320.5" font-size="10" fill="#ff0000" textLength="30.5" lengthAdjust="spacingAndGlyphs" stroke="#ff0000" stroke-width="0.25">0.0 mm</text>
<text class="sb" x="404.4" y="314.0" font-size="7" fill="#a0a0ff" textLength="32.0" lengthAdjust="spacingAndGlyphs">Humidity</text>
<text class="sb" x="454.4" y="314.0" font-size="7" fill="#a0a0ff" textLength="16.0" lengthAdjust="spacingAndGlyphs">73 %</text>
<text class="sb" x="634.4" y="315.0" font-size="7" fill="#40ff40" textLength="44.0" lengthAdjust="spacingAndGlyphs">Temperature</text>
<text class="sb" x="696.4" y="315.0" font-size="7" fill="#40ff40" textLength="22.0" lengthAdjust="spacingAndGlyphs">8.3 °C</text>
<text class="rn" x="728.4" y="320.5" font-size="10" fill="#ff00ff" textLength="41.0" lengthAdjust="spacingAndGlyphs" stroke="#ff00ff" stroke-width="0.25">Dew Point</text>
<text class="rn" x="774.4" y="320.5" font-size="10" fill="#ff00ff" textLength="20.0" lengthAdjust="spacingAndGlyphs" stroke="#ff00ff" stroke-width="0.25">3.7°C</text>
<rect x="381" y="329" width="370" height="190" fill="url(#g3)"/>
<line x1="381" y1="498.5" x2="751" y2="498.5" stroke="#f0f0f0" stroke-width="1" stroke-dasharray="1 1" opacity="0.34"/>
<line x1="381" y1="479.5" x2="751" y2="479.5" stroke="#f0f0f0" stroke-width="1" stroke-dasharray="1 1" opacity="0.34"/>
<line x1="381" y1="461.5" x2="751" y2="461.5" stroke="#f0f0f0" stroke-width="1" stroke-dasharray="1 1" opacity="0.34"/>
<line x1="381" y1="443.5" x2="751" y2="443.5" stroke="#f0f0f0" stroke-width="1" stroke-dasharray="1 1" opacity="0.34"/>
<line x1="381" y1="424.5" x2="751" y2="424.5" stroke="#f0f0f0" stroke-width="1" stroke-dasharray="1 1" opacity="0.34"/>
<line x1="381" y1="406.5" x2="751" y2="406.5" stroke="#f0f0f0" stroke-width="1" stroke-dasharray="1 1" opacity="0.34"/>
<line x1="381" y1="387.5" x2="751" y2="387.5" stroke="#f0f0f0" stroke-width="1" stroke-dasharray="1 1" opacity="0.34"/>
<line x1="381" y1="369.5" x2="751" y2="369.5" stroke="#f0f0f0" stroke-width="1" stroke-dasharray="1 1" opacity="0.34"/>
<line x1="381" y1="350.5" x2="751" y2="350.5" stroke="#f0f0f0" stroke-width="1" stroke-dasharray="1 1" opacity="0.34"/>
<line x1="570.5" y1="329" x2="570.5" y2="516" stroke="#f0f0f0" stroke-width="1" stroke-dasharray="1 1" opacity="0.36"/>
<line x1="598.5" y1="329" x2="598.5" y2="516" stroke="#f0f0f0" stroke-width="1" stroke-dasharray="1 1" opacity="0.36"/>
<line x1="626.5" y1="329" x2="626.5" y2="516" stroke="#f0f0f0" stroke-width="1" stroke-dasharray="1 1" opacity="0.36"/>
<line x1="655.0" y1="329" x2="655.0" y2="516" stroke="#f0f0f0" stroke-width="1" stroke-dasharray="1 1" opacity="0.36"/>
<line x1="683.0" y1="329" x2="683.0" y2="516" stroke="#f0f0f0" stroke-width="1" stroke-dasharray="1 1" opacity="0.36"/>
<line x1="711.5" y1="329" x2="711.5" y2="516" stroke="#f0f0f0" stroke-width="1" stroke-dasharray="1 1" opacity="0.36"/>
<line x1="739.5" y1="329" x2="739.5" y2="516" stroke="#f0f0f0" stroke-width="1" stroke-dasharray="1 1" opacity="0.36"/>
<path d="M0 523.5H0" stroke="#000" stroke-width="1" fill="none"/>
<path d="M570.5 521v2.5M556.4 521v1.5 M598.5 521v2.5M584.4 521v1.5 M626.5 521v2.5M612.4 521v1.5 M655.0 521v2.5M640.9 521v1.5 M683.0 521v2.5M668.9 521v1.5 M711.5 521v2.5M697.4 521v1.5 M739.5 521v2.5M725.4 521v1.5" stroke="#a0a0a0" stroke-width="1" fill="none"/>
<line x1="381.5" y1="329" x2="381.5" y2="519" stroke="#f0f0f0" stroke-width="1.4" opacity="1"/>
<line x1="750.8" y1="329" x2="750.8" y2="519" stroke="#e0e0e0" stroke-width="1.4" opacity="1"/>
<line x1="381" y1="519.3" x2="751.5" y2="519.3" stroke="#b0b0b0" stroke-width="1.2" opacity="1"/>
<line x1="361" y1="330" x2="361" y2="517" stroke="#8484e8" stroke-width="2" opacity="1"/>
<path d="M355.5 516.5H360.5 M355.5 498.5H360.5 M355.5 479.5H360.5 M355.5 461.5H360.5 M355.5 443.5H360.5 M355.5 424.5H360.5 M355.5 406.5H360.5 M355.5 387.5H360.5 M355.5 369.5H360.5 M355.5 350.5H360.5 M355.5 332.5H360.5" stroke="#8484e8" stroke-width="1.2" fill="none"/>
<path d="M358 513.5H360.5 M358 509.5H360.5 M358 505.5H360.5 M358 501.5H360.5 M358 494.5H360.5 M358 490.5H360.5 M358 487.5H360.5 M358 483.5H360.5 M358 476.5H360.5 M358 472.5H360.5 M358 468.5H360.5 M358 465.5H360.5 M358 457.5H360.5 M358 454.5H360.5 M358 450.5H360.5 M358 446.5H360.5 M358 439.5H360.5 M358 435.5H360.5 M358 431.5H360.5 M358 428.5H360.5 M358 420.5H360.5 M358 417.5H360.5 M358 413.5H360.5 M358 409.5H360.5 M358 402.5H360.5 M358 398.5H360.5 M358 395.5H360.5 M358 391.5H360.5 M358 384.5H360.5 M358 380.5H360.5 M358 376.5H360.5 M358 373.5H360.5 M358 365.5H360.5 M358 361.5H360.5 M358 358.5H360.5 M358 354.5H360.5 M358 347.5H360.5 M358 343.5H360.5 M358 339.5H360.5 M358 336.5H360.5" stroke="#7070c8" stroke-width="1" fill="none"/>
<text class="sn" x="353.0" y="519.1" font-size="9.5" fill="#5470ff" text-anchor="end">0</text>
<text class="sn" x="353.0" y="500.7" font-size="9.5" fill="#5470ff" text-anchor="end">10</text>
<text class="sn" x="353.0" y="482.3" font-size="9.5" fill="#5470ff" text-anchor="end">20</text>
<text class="sn" x="353.0" y="463.8" font-size="9.5" fill="#5470ff" text-anchor="end">30</text>
<text class="sn" x="353.0" y="445.4" font-size="9.5" fill="#5470ff" text-anchor="end">40</text>
<text class="sn" x="353.0" y="427.0" font-size="9.5" fill="#5470ff" text-anchor="end">50</text>
<text class="sn" x="353.0" y="408.6" font-size="9.5" fill="#5470ff" text-anchor="end">60</text>
<text class="sn" x="353.0" y="390.2" font-size="9.5" fill="#5470ff" text-anchor="end">70</text>
<text class="sn" x="353.0" y="371.7" font-size="9.5" fill="#5470ff" text-anchor="end">80</text>
<text class="sn" x="353.0" y="353.3" font-size="9.5" fill="#5470ff" text-anchor="end">90</text>
<text class="sn" x="353.0" y="334.9" font-size="9.5" fill="#5470ff" text-anchor="end">100</text>
<path d="M376 516.5H380 M376 486.5H380 M376 455.5H380 M376 424.5H380 M376 393.5H380 M376 363.5H380 M376 332.5H380" stroke="#ff0000" stroke-width="1.3" fill="none"/>
<path d="M378 509.5H380 M378 501.5H380 M378 493.5H380 M378 478.5H380 M378 470.5H380 M378 462.5H380 M378 447.5H380 M378 439.5H380 M378 432.5H380 M378 416.5H380 M378 409.5H380 M378 401.5H380 M378 386.5H380 M378 378.5H380 M378 370.5H380 M378 355.5H380 M378 347.5H380 M378 340.5H380" stroke="#ff0000" stroke-width="1.1" fill="none"/>
<text class="sn" x="374.0" y="519.0" font-size="9.5" fill="#ff0000" text-anchor="end">0</text>
<text class="sn" x="374.0" y="488.3" font-size="9.5" fill="#ff0000" text-anchor="end">5</text>
<text class="sn" x="374.0" y="457.6" font-size="9.5" fill="#ff0000" text-anchor="end">10</text>
<text class="sn" x="374.0" y="426.9" font-size="9.5" fill="#ff0000" text-anchor="end">15</text>
<text class="sn" x="374.0" y="396.2" font-size="9.5" fill="#ff0000" text-anchor="end">20</text>
<text class="sn" x="374.0" y="365.5" font-size="9.5" fill="#ff0000" text-anchor="end">25</text>
<text class="sn" x="374.0" y="334.8" font-size="9.5" fill="#ff0000" text-anchor="end">30</text>
<line x1="752.2" y1="330" x2="752.2" y2="518" stroke="#00ff00" stroke-width="1" opacity="1"/>
<path d="M752 516.5H756 M752 501.5H756 M752 486.5H756 M752 470.5H756 M752 455.5H756 M752 439.5H756 M752 424.5H756 M752 409.5H756 M752 393.5H756 M752 378.5H756 M752 363.5H756 M752 347.5H756 M752 332.5H756" stroke="#00ff00" stroke-width="1.3" fill="none"/>
<path d="M752 512.5H754.3 M752 509.5H754.3 M752 505.5H754.3 M752 497.5H754.3 M752 493.5H754.3 M752 489.5H754.3 M752 482.5H754.3 M752 478.5H754.3 M752 474.5H754.3 M752 466.5H754.3 M752 462.5H754.3 M752 459.5H754.3 M752 451.5H754.3 M752 447.5H754.3 M752 443.5H754.3 M752 436.5H754.3 M752 432.5H754.3 M752 428.5H754.3 M752 420.5H754.3 M752 416.5H754.3 M752 413.5H754.3 M752 405.5H754.3 M752 401.5H754.3 M752 397.5H754.3 M752 390.5H754.3 M752 386.5H754.3 M752 382.5H754.3 M752 374.5H754.3 M752 370.5H754.3 M752 367.5H754.3 M752 359.5H754.3 M752 355.5H754.3 M752 351.5H754.3 M752 344.5H754.3 M752 340.5H754.3 M752 336.5H754.3" stroke="#00ff00" stroke-width="1" fill="none"/>
<text class="sn" x="759.6" y="519.6" font-size="9.5" fill="#00ff00">-20</text>
<text class="sn" x="759.6" y="504.2" font-size="9.5" fill="#00ff00">-15</text>
<text class="sn" x="759.6" y="488.9" font-size="9.5" fill="#00ff00">-10</text>
<text class="sn" x="759.6" y="473.5" font-size="9.5" fill="#00ff00">-5</text>
<text class="sn" x="759.6" y="458.2" font-size="9.5" fill="#00ff00">0</text>
<text class="sn" x="759.6" y="442.8" font-size="9.5" fill="#00ff00">5</text>
<text class="sn" x="759.6" y="427.5" font-size="9.5" fill="#00ff00">10</text>
<text class="sn" x="759.6" y="412.1" font-size="9.5" fill="#00ff00">15</text>
<text class="sn" x="759.6" y="396.8" font-size="9.5" fill="#00ff00">20</text>
<text class="sn" x="759.6" y="381.4" font-size="9.5" fill="#00ff00">25</text>
<text class="sn" x="759.6" y="366.1" font-size="9.5" fill="#00ff00">30</text>
<text class="sn" x="759.6" y="350.8" font-size="9.5" fill="#00ff00">35</text>
<text class="sn" x="759.6" y="335.4" font-size="9.5" fill="#00ff00">40</text>
<line x1="553" y1="498" x2="553" y2="516" stroke="#8888f0" stroke-width="1.4" opacity="1"/>
<polyline points="553.0,416.0 556.0,414.5 559.0,413.8 565.0,411.0 572.0,407.0 578.0,404.0 582.0,401.0 585.0,398.5 588.7,394.7 594.0,392.5 598.0,390.5 603.5,388.4 608.0,387.5 614.0,386.7 622.0,386.9 630.0,386.8 635.0,387.2 640.0,389.0 646.0,391.8 652.0,392.6 658.6,393.9 663.0,395.3 667.0,396.0 670.0,396.2 673.5,395.5 677.0,392.5 682.0,388.4 688.0,387.0 692.0,386.2 696.8,385.4 705.0,385.0 712.0,384.3 718.0,384.0 726.0,383.6 733.0,383.2 739.0,382.9 744.0,381.6 748.0,381.0" fill="none" stroke="#8888f0" stroke-width="1.35" stroke-linejoin="round"/>
<line x1="553.3" y1="455" x2="553.3" y2="499" stroke="#ff00ff" stroke-width="1.6" opacity="1"/>
<polyline points="553.5,439.0 556.0,438.6 560.0,439.6 566.0,439.2 572.0,440.3 580.0,440.0 588.0,440.8 596.0,440.3 604.0,440.9 612.0,440.4 620.0,441.0 630.0,440.7 640.0,441.0 655.0,440.9 670.0,441.2 680.0,441.8 695.0,442.0 710.0,442.6 725.0,443.0 740.0,443.5 749.0,443.3" fill="none" stroke="#ff00ff" stroke-width="1.4" stroke-linejoin="round"/>
<line x1="384" y1="455.7" x2="553" y2="455.7" stroke="#d020d0" stroke-width="1.2" opacity="1"/>
<polyline points="383.5,454.8 552.5,454.8 553.0,409.5 554.0,409.5 558.0,411.5 565.4,413.8 573.0,416.2 582.4,418.9 589.0,420.8 595.0,422.3 603.0,423.0 612.0,423.5 620.0,424.2 626.8,424.8 632.0,423.5 639.5,422.3 650.0,422.0 660.0,421.8 671.3,421.8 675.0,423.0 679.8,424.8 690.0,425.4 700.0,426.0 709.4,426.5 720.0,427.6 730.6,428.6 740.0,428.8 749.0,428.9" fill="none" stroke="#20e820" stroke-width="1.5" stroke-linejoin="round"/>
<line x1="381" y1="515.8" x2="749.5" y2="515.8" stroke="#ff0000" stroke-width="2.3" opacity="1"/>
<line x1="563.5" y1="499" x2="563.5" y2="523" stroke="#d8d830" stroke-width="1" stroke-dasharray="1 1" opacity="1"/>
<text class="sn" x="548.9" y="498.5" font-size="9" fill="#d8d850" textLength="30.5" lengthAdjust="spacingAndGlyphs">SunSet</text>
<text class="sn" x="549.9" y="532.3" font-size="8.5" fill="#ffff00" textLength="28.5" lengthAdjust="spacingAndGlyphs">SunSet</text>
<text class="sn" x="570.5" y="532.3" font-size="9" fill="#ffff00" text-anchor="middle">18</text>
<text class="sn" x="598.5" y="532.3" font-size="9" fill="#ffff00" text-anchor="middle">19</text>
<text class="sn" x="626.5" y="532.3" font-size="9" fill="#ffff00" text-anchor="middle">20</text>
<text class="sn" x="655.0" y="532.3" font-size="9" fill="#ffff00" text-anchor="middle">21</text>
<text class="sn" x="683.0" y="532.3" font-size="9" fill="#ffff00" text-anchor="middle">22</text>
<text class="sn" x="711.5" y="532.3" font-size="9" fill="#ffff00" text-anchor="middle">23</text>
<text class="sn" x="739.5" y="532.3" font-size="9" fill="#ffff00" text-anchor="middle">00</text>
<circle cx="191.8" cy="86.8" r="45.5" fill="url(#bezel)"/>
<circle cx="191.8" cy="86.8" r="44.9" fill="none" stroke="#8c8c8c" stroke-width="1.2"/>
<circle cx="191.8" cy="86.8" r="40.9" fill="url(#face)" stroke="#b4b4b4" stroke-width="0.8"/>
<path d="M163.80 114.80 A39.6 39.6 0 0 1 163.80 58.80" fill="none" stroke="#22dd22" stroke-width="1.7"/>
<path d="M163.80 58.80 A39.6 39.6 0 0 1 219.80 58.80" fill="none" stroke="#f2ee10" stroke-width="1.7"/>
<path d="M219.80 58.80 A39.6 39.6 0 0 1 219.80 114.80" fill="none" stroke="#ff1818" stroke-width="1.9"/>
<line x1="168.11" y1="110.49" x2="164.51" y2="114.09" stroke="#3a3aff" stroke-width="1.5"/>
<line x1="164.06" y1="109.75" x2="162.06" y2="111.40" stroke="#3a3aff" stroke-width="0.9"/>
<line x1="162.03" y1="107.04" x2="159.87" y2="108.50" stroke="#3a3aff" stroke-width="0.9"/>
<line x1="160.25" y1="104.14" x2="157.97" y2="105.40" stroke="#3a3aff" stroke-width="0.9"/>
<line x1="158.76" y1="101.10" x2="156.37" y2="102.13" stroke="#3a3aff" stroke-width="0.9"/>
<line x1="159.94" y1="97.15" x2="155.09" y2="98.73" stroke="#3a3aff" stroke-width="1.5"/>
<line x1="156.67" y1="94.65" x2="154.13" y2="95.22" stroke="#3a3aff" stroke-width="0.9"/>
<line x1="156.08" y1="91.31" x2="153.50" y2="91.64" stroke="#3a3aff" stroke-width="0.9"/>
<line x1="155.82" y1="87.93" x2="153.22" y2="88.01" stroke="#3a3aff" stroke-width="0.9"/>
<line x1="155.87" y1="84.54" x2="153.28" y2="84.38" stroke="#3a3aff" stroke-width="0.9"/>
<line x1="158.71" y1="81.56" x2="153.68" y2="80.76" stroke="#3a3aff" stroke-width="1.5"/>
<line x1="156.93" y1="77.85" x2="154.41" y2="77.20" stroke="#3a3aff" stroke-width="0.9"/>
<line x1="157.93" y1="74.61" x2="155.48" y2="73.72" stroke="#3a3aff" stroke-width="0.9"/>
<line x1="159.23" y1="71.47" x2="156.87" y2="70.36" stroke="#3a3aff" stroke-width="0.9"/>
<line x1="160.81" y1="68.47" x2="158.58" y2="67.15" stroke="#3a3aff" stroke-width="0.9"/>
<line x1="164.70" y1="67.11" x2="160.57" y2="64.11" stroke="#3a3aff" stroke-width="1.5"/>
<line x1="164.80" y1="62.99" x2="162.85" y2="61.27" stroke="#3a3aff" stroke-width="0.9"/>
<line x1="167.16" y1="60.56" x2="165.38" y2="58.66" stroke="#3a3aff" stroke-width="0.9"/>
<line x1="169.74" y1="58.35" x2="168.14" y2="56.30" stroke="#3a3aff" stroke-width="0.9"/>
<line x1="172.51" y1="56.40" x2="171.12" y2="54.21" stroke="#3a3aff" stroke-width="0.9"/>
<line x1="176.59" y1="56.95" x2="174.28" y2="52.41" stroke="#3a3aff" stroke-width="1.5"/>
<line x1="178.55" y1="53.33" x2="177.59" y2="50.91" stroke="#3a3aff" stroke-width="0.9"/>
<line x1="181.76" y1="52.23" x2="181.03" y2="49.73" stroke="#3a3aff" stroke-width="0.9"/>
<line x1="185.05" y1="51.44" x2="184.57" y2="48.88" stroke="#3a3aff" stroke-width="0.9"/>
<line x1="188.41" y1="50.96" x2="188.17" y2="48.37" stroke="#3a3aff" stroke-width="0.9"/>
<line x1="191.80" y1="53.30" x2="191.80" y2="48.20" stroke="#3a3aff" stroke-width="1.5"/>
<line x1="195.19" y1="50.96" x2="195.43" y2="48.37" stroke="#3a3aff" stroke-width="0.9"/>
<line x1="198.55" y1="51.44" x2="199.03" y2="48.88" stroke="#3a3aff" stroke-width="0.9"/>
<line x1="201.84" y1="52.23" x2="202.57" y2="49.73" stroke="#3a3aff" stroke-width="0.9"/>
<line x1="205.05" y1="53.33" x2="206.01" y2="50.91" stroke="#3a3aff" stroke-width="0.9"/>
<line x1="207.01" y1="56.95" x2="209.32" y2="52.41" stroke="#3a3aff" stroke-width="1.5"/>
<line x1="211.09" y1="56.40" x2="212.48" y2="54.21" stroke="#3a3aff" stroke-width="0.9"/>
<line x1="213.86" y1="58.35" x2="215.46" y2="56.30" stroke="#3a3aff" stroke-width="0.9"/>
<line x1="216.44" y1="60.56" x2="218.22" y2="58.66" stroke="#3a3aff" stroke-width="0.9"/>
<line x1="218.80" y1="62.99" x2="220.75" y2="61.27" stroke="#3a3aff" stroke-width="0.9"/>
<line x1="218.90" y1="67.11" x2="223.03" y2="64.11" stroke="#3a3aff" stroke-width="1.5"/>
<line x1="222.79" y1="68.47" x2="225.02" y2="67.15" stroke="#3a3aff" stroke-width="0.9"/>
<line x1="224.37" y1="71.47" x2="226.73" y2="70.36" stroke="#3a3aff" stroke-width="0.9"/>
<line x1="225.67" y1="74.61" x2="228.12" y2="73.72" stroke="#3a3aff" stroke-width="0.9"/>
<line x1="226.67" y1="77.85" x2="229.19" y2="77.20" stroke="#3a3aff" stroke-width="0.9"/>
<line x1="224.89" y1="81.56" x2="229.92" y2="80.76" stroke="#3a3aff" stroke-width="1.5"/>
<line x1="227.73" y1="84.54" x2="230.32" y2="84.38" stroke="#3a3aff" stroke-width="0.9"/>
<line x1="227.78" y1="87.93" x2="230.38" y2="88.01" stroke="#3a3aff" stroke-width="0.9"/>
<line x1="227.52" y1="91.31" x2="230.10" y2="91.64" stroke="#3a3aff" stroke-width="0.9"/>
<line x1="226.93" y1="94.65" x2="229.47" y2="95.22" stroke="#3a3aff" stroke-width="0.9"/>
<line x1="223.66" y1="97.15" x2="228.51" y2="98.73" stroke="#3a3aff" stroke-width="1.5"/>
<line x1="224.84" y1="101.10" x2="227.23" y2="102.13" stroke="#3a3aff" stroke-width="0.9"/>
<line x1="223.35" y1="104.14" x2="225.63" y2="105.40" stroke="#3a3aff" stroke-width="0.9"/>
<line x1="221.57" y1="107.04" x2="223.73" y2="108.50" stroke="#3a3aff" stroke-width="0.9"/>
<line x1="219.54" y1="109.75" x2="221.54" y2="111.40" stroke="#3a3aff" stroke-width="0.9"/>
<line x1="215.49" y1="110.49" x2="219.09" y2="114.09" stroke="#3a3aff" stroke-width="1.5"/>
<text class="sb" x="170.9" y="110.0" font-size="6.3" fill="#6464ff" text-anchor="middle" opacity="0.85">0</text>
<text class="sb" x="163.6" y="98.2" font-size="6.3" fill="#6464ff" text-anchor="middle" opacity="0.85">5</text>
<text class="sb" x="162.6" y="84.5" font-size="6.3" fill="#6464ff" text-anchor="middle" opacity="0.85">10</text>
<text class="sb" x="167.9" y="71.7" font-size="6.3" fill="#6464ff" text-anchor="middle" opacity="0.85">15</text>
<text class="sb" x="178.4" y="62.7" font-size="6.3" fill="#6464ff" text-anchor="middle" opacity="0.85">20</text>
<text class="sb" x="191.8" y="59.5" font-size="6.3" fill="#6464ff" text-anchor="middle" opacity="0.85">25</text>
<text class="sb" x="205.2" y="62.7" font-size="6.3" fill="#6464ff" text-anchor="middle" opacity="0.85">30</text>
<text class="sb" x="215.7" y="71.7" font-size="6.3" fill="#6464ff" text-anchor="middle" opacity="0.85">35</text>
<text class="sb" x="221.0" y="84.5" font-size="6.3" fill="#6464ff" text-anchor="middle" opacity="0.85">40</text>
<text class="sb" x="220.0" y="98.2" font-size="6.3" fill="#6464ff" text-anchor="middle" opacity="0.85">45</text>
<text class="sb" x="212.7" y="110.0" font-size="6.3" fill="#6464ff" text-anchor="middle" opacity="0.85">50</text>
<text class="sn" x="179.0" y="121.0" font-size="16.5" fill="#2222ff" textLength="24.4" lengthAdjust="spacingAndGlyphs" stroke="#2222ff" stroke-width="0.3">0.0</text>
<line x1="191.8" y1="86.8" x2="177.68" y2="99.51" stroke="#30d040" stroke-width="1.3"/>
<line x1="168.47" y1="110.13" x2="202.41" y2="76.19" stroke="#ff4646" stroke-width="1.7"/>
<polygon points="197.60,76.33 202.27,81.00 204.88,73.72" fill="#ff5a5a"/>
<circle cx="191.8" cy="86.8" r="8.6" fill="url(#hub)"/>
<circle cx="286" cy="85.7" r="33.7" fill="url(#bezel)"/>
<circle cx="286" cy="85.7" r="33.2" fill="none" stroke="#909090" stroke-width="1"/>
<circle cx="286" cy="85.7" r="31.1" fill="url(#face)" stroke="#bcbcbc" stroke-width="0.6"/>
<line x1="286.00" y1="58.90" x2="286.00" y2="55.90" stroke="#4a4aff" stroke-width="1.3"/>
<line x1="290.90" y1="57.93" x2="291.17" y2="56.35" stroke="#4a4aff" stroke-width="1.0"/>
<line x1="295.64" y1="59.20" x2="296.19" y2="57.70" stroke="#4a4aff" stroke-width="1.0"/>
<line x1="300.10" y1="61.28" x2="300.90" y2="59.89" stroke="#4a4aff" stroke-width="1.0"/>
<line x1="304.13" y1="64.10" x2="305.16" y2="62.87" stroke="#4a4aff" stroke-width="1.0"/>
<line x1="307.60" y1="67.57" x2="308.83" y2="66.54" stroke="#4a4aff" stroke-width="1.0"/>
<line x1="310.42" y1="71.60" x2="311.81" y2="70.80" stroke="#4a4aff" stroke-width="1.0"/>
<line x1="312.50" y1="76.06" x2="314.00" y2="75.51" stroke="#4a4aff" stroke-width="1.0"/>
<line x1="313.77" y1="80.80" x2="315.35" y2="80.53" stroke="#4a4aff" stroke-width="1.0"/>
<line x1="312.80" y1="85.70" x2="315.80" y2="85.70" stroke="#4a4aff" stroke-width="1.3"/>
<line x1="313.77" y1="90.60" x2="315.35" y2="90.87" stroke="#4a4aff" stroke-width="1.0"/>
<line x1="312.50" y1="95.34" x2="314.00" y2="95.89" stroke="#4a4aff" stroke-width="1.0"/>
<line x1="310.42" y1="99.80" x2="311.81" y2="100.60" stroke="#4a4aff" stroke-width="1.0"/>
<line x1="307.60" y1="103.83" x2="308.83" y2="104.86" stroke="#4a4aff" stroke-width="1.0"/>
<line x1="304.13" y1="107.30" x2="305.16" y2="108.53" stroke="#4a4aff" stroke-width="1.0"/>
<line x1="300.10" y1="110.12" x2="300.90" y2="111.51" stroke="#4a4aff" stroke-width="1.0"/>
<line x1="295.64" y1="112.20" x2="296.19" y2="113.70" stroke="#4a4aff" stroke-width="1.0"/>
<line x1="290.90" y1="113.47" x2="291.17" y2="115.05" stroke="#4a4aff" stroke-width="1.0"/>
<line x1="286.00" y1="112.50" x2="286.00" y2="115.50" stroke="#4a4aff" stroke-width="1.3"/>
<line x1="281.10" y1="113.47" x2="280.83" y2="115.05" stroke="#4a4aff" stroke-width="1.0"/>
<line x1="276.36" y1="112.20" x2="275.81" y2="113.70" stroke="#4a4aff" stroke-width="1.0"/>
<line x1="271.90" y1="110.12" x2="271.10" y2="111.51" stroke="#4a4aff" stroke-width="1.0"/>
<line x1="267.87" y1="107.30" x2="266.84" y2="108.53" stroke="#4a4aff" stroke-width="1.0"/>
<line x1="264.40" y1="103.83" x2="263.17" y2="104.86" stroke="#4a4aff" stroke-width="1.0"/>
<line x1="261.58" y1="99.80" x2="260.19" y2="100.60" stroke="#4a4aff" stroke-width="1.0"/>
<line x1="259.50" y1="95.34" x2="258.00" y2="95.89" stroke="#4a4aff" stroke-width="1.0"/>
<line x1="258.23" y1="90.60" x2="256.65" y2="90.87" stroke="#4a4aff" stroke-width="1.0"/>
<line x1="259.20" y1="85.70" x2="256.20" y2="85.70" stroke="#4a4aff" stroke-width="1.3"/>
<line x1="258.23" y1="80.80" x2="256.65" y2="80.53" stroke="#4a4aff" stroke-width="1.0"/>
<line x1="259.50" y1="76.06" x2="258.00" y2="75.51" stroke="#4a4aff" stroke-width="1.0"/>
<line x1="261.58" y1="71.60" x2="260.19" y2="70.80" stroke="#4a4aff" stroke-width="1.0"/>
<line x1="264.40" y1="67.57" x2="263.17" y2="66.54" stroke="#4a4aff" stroke-width="1.0"/>
<line x1="267.87" y1="64.10" x2="266.84" y2="62.87" stroke="#4a4aff" stroke-width="1.0"/>
<line x1="271.90" y1="61.28" x2="271.10" y2="59.89" stroke="#4a4aff" stroke-width="1.0"/>
<line x1="276.36" y1="59.20" x2="275.81" y2="57.70" stroke="#4a4aff" stroke-width="1.0"/>
<line x1="281.10" y1="57.93" x2="280.83" y2="56.35" stroke="#4a4aff" stroke-width="1.0"/>
<text class="sb" x="286.0" y="63.5" font-size="6.5" fill="#6a6aff" text-anchor="middle" opacity="0.85">360</text>
<text class="sb" x="302.3" y="71.7" font-size="6.5" fill="#6a6aff" text-anchor="middle" opacity="0.85">45</text>
<text class="sb" x="307.5" y="88.0" font-size="6.5" fill="#6a6aff" text-anchor="middle" opacity="0.85">90</text>
<text class="sb" x="301.6" y="103.6" font-size="6.5" fill="#6a6aff" text-anchor="middle" opacity="0.85">135</text>
<text class="sb" x="286.0" y="109.5" font-size="6.5" fill="#6a6aff" text-anchor="middle" opacity="0.85">180</text>
<text class="sb" x="269.4" y="104.6" font-size="6.5" fill="#6a6aff" text-anchor="middle" opacity="0.85">225</text>
<text class="sb" x="263.5" y="88.0" font-size="6.5" fill="#6a6aff" text-anchor="middle" opacity="0.85">270</text>
<text class="sb" x="268.7" y="70.7" font-size="6.5" fill="#6a6aff" text-anchor="middle" opacity="0.85">315</text>
<line x1="276.45" y1="95.25" x2="305.09" y2="66.61" stroke="#ff4040" stroke-width="2.6"/>
<polygon points="274.62,93.41 278.29,97.08 280.34,91.36" fill="#ff5a5a"/>
<line x1="285.2" y1="84.9" x2="304.58" y2="65.42" stroke="#28c838" stroke-width="1.1"/>
<circle cx="286" cy="85.7" r="6.6" fill="url(#hub)"/>
<text class="sb" x="281.4" y="48.6" font-size="11" fill="#00ff00" textLength="8.2" lengthAdjust="spacingAndGlyphs">N</text>
<text class="sb" x="244.4" y="58.5" font-size="11" fill="#00ff00" textLength="20.7" lengthAdjust="spacingAndGlyphs">NW</text>
<text class="sb" x="308.4" y="58.5" font-size="11" fill="#00ff00" textLength="16.0" lengthAdjust="spacingAndGlyphs">NE</text>
<text class="sb" x="239.4" y="90.0" font-size="11" fill="#00ff00" textLength="12.5" lengthAdjust="spacingAndGlyphs">W</text>
<text class="sb" x="322.4" y="90.0" font-size="11" fill="#00ff00" textLength="6.5" lengthAdjust="spacingAndGlyphs">E</text>
<text class="sb" x="243.4" y="124.3" font-size="11" fill="#00ff00" textLength="20.0" lengthAdjust="spacingAndGlyphs">SW</text>
<text class="sb" x="306.4" y="124.3" font-size="11" fill="#00ff00" textLength="15.3" lengthAdjust="spacingAndGlyphs">SE</text>
<text class="sb" x="282.1" y="131.0" font-size="11" fill="#00ff00" textLength="8.1" lengthAdjust="spacingAndGlyphs">S</text>
<g clip-path="url(#ccl)">
<rect x="202.5" y="384.3" width="128.3" height="86.7" fill="#0e0e1e"/>
<rect x="202.5" y="384.3" width="128.3" height="86.7" filter="url(#clouds)"/>
<ellipse cx="268" cy="390" rx="11" ry="5" fill="#a4a2b2" opacity="0.55" filter="url(#blur2)"/>
<ellipse cx="282" cy="410" rx="8" ry="5" fill="#a4a2b2" opacity="0.5" filter="url(#blur2)"/>
<ellipse cx="290" cy="404" rx="6" ry="3.5" fill="#a4a2b2" opacity="0.55" filter="url(#blur2)"/>
<ellipse cx="289" cy="415" rx="7" ry="5" fill="#a4a2b2" opacity="0.45" filter="url(#blur2)"/>
<ellipse cx="279" cy="418" rx="7" ry="3.5" fill="#a4a2b2" opacity="0.4" filter="url(#blur2)"/>
<ellipse cx="294" cy="410" rx="4" ry="6" fill="#a4a2b2" opacity="0.35" filter="url(#blur2)"/>
<ellipse cx="320" cy="396" rx="10" ry="5" fill="#a4a2b2" opacity="0.6" filter="url(#blur2)"/>
<ellipse cx="211" cy="398" rx="8" ry="4" fill="#a4a2b2" opacity="0.5" filter="url(#blur2)"/>
<ellipse cx="234" cy="397" rx="6" ry="3" fill="#a4a2b2" opacity="0.45" filter="url(#blur2)"/>
<ellipse cx="262" cy="424" rx="9" ry="5" fill="#a4a2b2" opacity="0.55" filter="url(#blur2)"/>
<ellipse cx="240" cy="427" rx="16" ry="4" fill="#a4a2b2" opacity="0.45" filter="url(#blur2)"/>
<ellipse cx="318" cy="421" rx="12" ry="4" fill="#a4a2b2" opacity="0.5" filter="url(#blur2)"/>
<ellipse cx="232" cy="412" rx="10" ry="3" fill="#a4a2b2" opacity="0.3" filter="url(#blur2)"/>
<ellipse cx="300" cy="430" rx="14" ry="3" fill="#a4a2b2" opacity="0.35" filter="url(#blur2)"/>
<ellipse cx="222" cy="440" rx="18" ry="2.5" fill="#a4a2b2" opacity="0.25" filter="url(#blur2)"/>
<ellipse cx="280" cy="445" rx="25" ry="2.5" fill="#a4a2b2" opacity="0.25" filter="url(#blur2)"/>
<ellipse cx="250" cy="436" rx="20" ry="2.5" fill="#a4a2b2" opacity="0.3" filter="url(#blur2)"/>
<rect x="202.5" y="384.3" width="128.3" height="86.7" fill="url(#cshade)"/>
<rect x="202.5" y="384.3" width="1.1" height="86.7" fill="#8c8c98"/>
</g>

</svg>
</body></html>
